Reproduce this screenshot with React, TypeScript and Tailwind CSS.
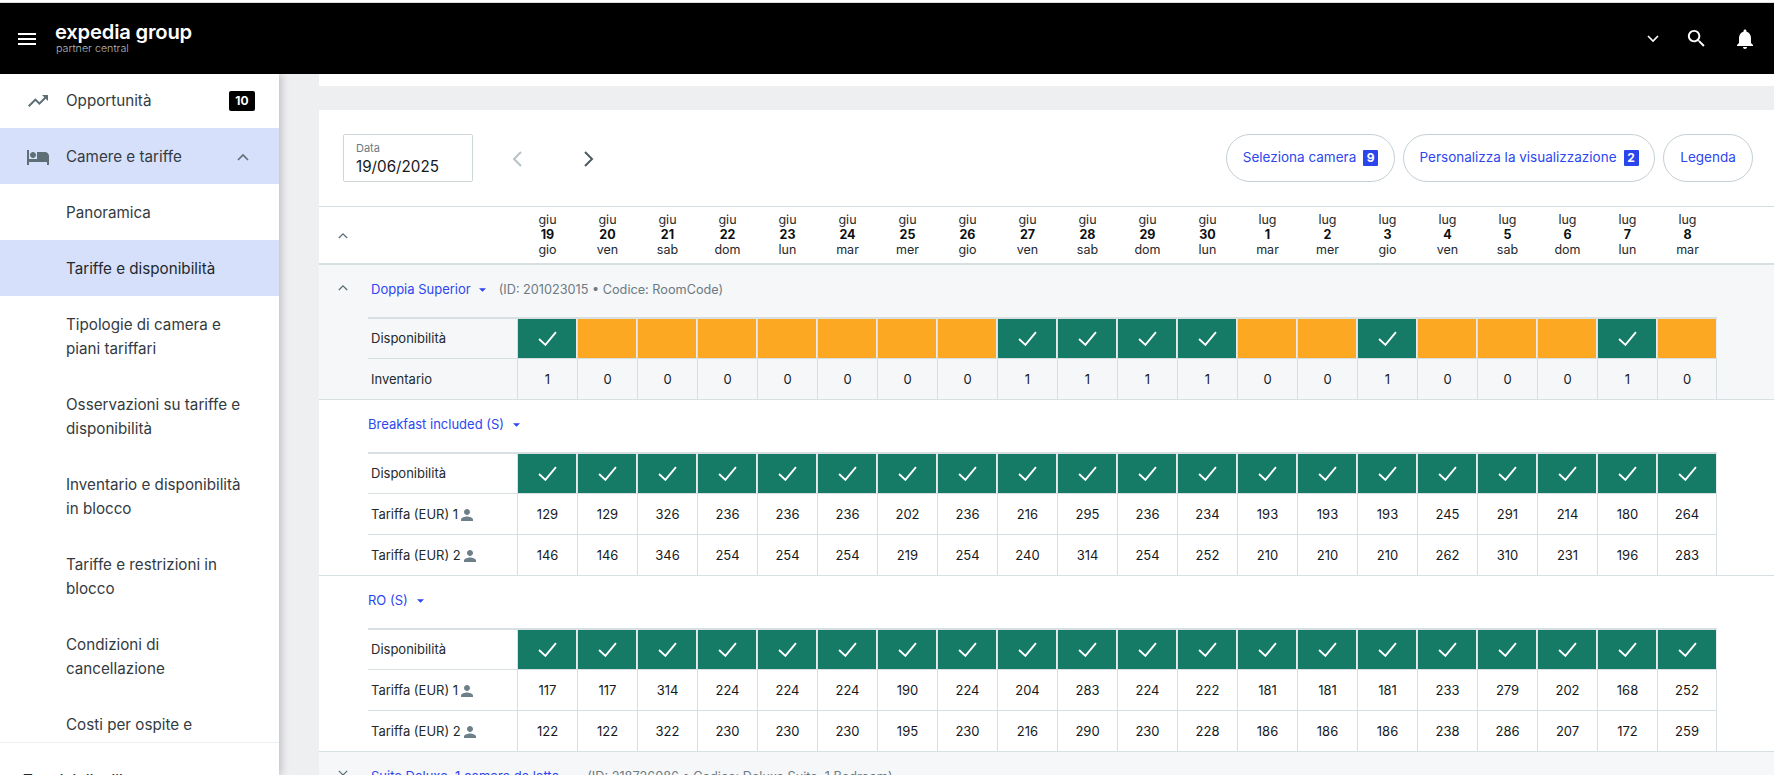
const dates = [
  ['giu', '19', 'gio'], ['giu', '20', 'ven'], ['giu', '21', 'sab'], ['giu', '22', 'dom'], ['giu', '23', 'lun'],
  ['giu', '24', 'mar'], ['giu', '25', 'mer'], ['giu', '26', 'gio'], ['giu', '27', 'ven'], ['giu', '28', 'sab'],
  ['giu', '29', 'dom'], ['giu', '30', 'lun'], ['lug', '1', 'mar'], ['lug', '2', 'mer'], ['lug', '3', 'gio'],
  ['lug', '4', 'ven'], ['lug', '5', 'sab'], ['lug', '6', 'dom'], ['lug', '7', 'lun'], ['lug', '8', 'mar'],
]

const inventory = [1, 0, 0, 0, 0, 0, 0, 0, 1, 1, 1, 1, 0, 0, 1, 0, 0, 0, 1, 0]
const allOpen = inventory.map(() => 1)

const breakfast1 = [129, 129, 326, 236, 236, 236, 202, 236, 216, 295, 236, 234, 193, 193, 193, 245, 291, 214, 180, 264]
const breakfast2 = [146, 146, 346, 254, 254, 254, 219, 254, 240, 314, 254, 252, 210, 210, 210, 262, 310, 231, 196, 283]
const ro1 = [117, 117, 314, 224, 224, 224, 190, 224, 204, 283, 224, 222, 181, 181, 181, 233, 279, 202, 168, 252]
const ro2 = [122, 122, 322, 230, 230, 230, 195, 230, 216, 290, 230, 228, 186, 186, 186, 238, 286, 207, 172, 259]

const navItems = [
  ['Tipologie di camera e', 'piani tariffari'],
  ['Osservazioni su tariffe e', 'disponibilità'],
  ['Inventario e disponibilità', 'in blocco'],
  ['Tariffe e restrizioni in', 'blocco'],
  ['Condizioni di', 'cancellazione'],
  ['Costi per ospite e', 'occupazione'],
]

function MaterialIcon({ d, className }: { d: string; className: string }) {
  return (
    <svg viewBox="0 0 24 24" className={className} fill="currentColor">
      <path d={d} />
    </svg>
  )
}

function Chevron({ up, className }: { up?: boolean; className: string }) {
  return (
    <svg viewBox="0 0 12 8" className={className} fill="none" stroke="currentColor" strokeWidth="1.6">
      <path d={up ? 'M1 7l5-5 5 5' : 'M1 1l5 5 5-5'} />
    </svg>
  )
}

function Caret() {
  return (
    <svg viewBox="0 0 8 4" className="w-[7px] h-[4px] text-[#2d46f0]" fill="currentColor">
      <path d="M0 0h8L4 4z" />
    </svg>
  )
}

function AvailabilityRow({ values }: { values: number[] }) {
  return (
    <div className="flex h-[41px] border-t-2 border-[#d8dfe3]">
      <div className="w-[149px] pl-[3px] pt-[10px] text-[13px] leading-[18px] text-[#23292d]">Disponibilità</div>
      {values.map((v, i) => (
        <div key={i} className="w-[60px] border-l border-[#d8dfe3] flex bg-[#e6ebee]">
          <div className={`w-[58px] flex items-center justify-center ${v > 0 ? 'bg-[#157a66]' : 'bg-[#fca822]'}`}>
            {v > 0 && (
              <svg viewBox="0 0 18 14" className="w-[19px] h-[15px]" fill="none" stroke="#fff" strokeWidth="1.8">
                <path d="M1 7.5l6 5.5L17 1" />
              </svg>
            )}
          </div>
        </div>
      ))}
    </div>
  )
}

function ValueRow({ label, values, person }: { label: string; values: number[]; person?: boolean }) {
  return (
    <div className="flex h-[41px] border-t border-[#d8dfe3]">
      <div className="w-[149px] pl-[3px] pt-[11px] text-[13px] leading-[18px] text-[#23292d] flex items-start">
        <span>{label}</span>
        {person && (
          <MaterialIcon
            className="w-[18px] h-[18px] text-[#6d8089] mt-px"
            d="M12 12c2.21 0 4-1.79 4-4s-1.79-4-4-4-4 1.79-4 4 1.79 4 4 4zm0 2c-2.67 0-8 1.34-8 4v2h16v-2c0-2.66-5.33-4-8-4z"
          />
        )}
      </div>
      {values.map((v, i) => (
        <div
          key={i}
          className={`w-[60px] border-l border-[#d8dfe3] flex items-center justify-center pt-[2px] text-[13px] text-[#15191c] ${
            i === 19 ? 'border-r' : ''
          }`}
        >
          {v}
        </div>
      ))}
    </div>
  )
}

function RoomHeader({ name, code, open }: { name: string; code: string; open: boolean }) {
  return (
    <div className="h-[52px] flex items-center pl-[12px] pb-[2px]">
      {open ? (
        <Chevron up className="w-[10px] h-[7px] mx-[7px] mb-[6px] text-[#5d6e75]" />
      ) : (
        <svg viewBox="0 0 12 12" className="w-[10px] h-[10px] mx-[7px] mb-[4px] text-[#5d6e75]" fill="none" stroke="currentColor" strokeWidth="1.5">
          <path d="M1 1l10 10M11 1L1 11" />
        </svg>
      )}
      <span className="ml-[16px] text-[13px] text-[#2d46f0]">{name}</span>
      <span className="ml-[8px]"><Caret /></span>
      <span className="ml-[13px] text-[12.7px] text-[#6c7a82]">{code}</span>
    </div>
  )
}

function RatePlan({ name, first, second }: { name: string; first: number[]; second: number[] }) {
  return (
    <section className="border-b border-[#d8dfe3]">
      <div className="h-[52px] flex items-center pl-[49px] pb-[2px] gap-[9px]">
        <span className="text-[13px] text-[#2d46f0]">{name}</span>
        <Caret />
      </div>
      <div className="ml-[49px] w-[1349px]">
        <AvailabilityRow values={allOpen} />
        <ValueRow label="Tariffa (EUR) 1" values={first} person />
        <ValueRow label="Tariffa (EUR) 2" values={second} person />
      </div>
    </section>
  )
}

function PillButton({ label, count, className }: { label: string; count?: number; className: string }) {
  return (
    <button className={`h-[48px] rounded-full border border-[#c4d0d6] flex items-center justify-center gap-[7px] text-[13.5px] text-[#2d46f0] ${className}`}>
      {label}
      {count !== undefined && (
        <span className="w-[15px] h-[16px] bg-[#2b45ee] text-white text-[12px] font-bold leading-[16px] rounded-[1px] text-center">
          {count}
        </span>
      )}
    </button>
  )
}

export default function App() {
  return (
    <div className="h-[775px] overflow-hidden bg-[#eeeff1] font-['Inter','Liberation_Sans',sans-serif] flex flex-col">
      <div className="h-[3px] bg-white border-b border-[#dddddd]" />
      <header className="h-[71px] bg-black flex items-center text-white">
        <MaterialIcon className="w-[24px] h-[24px] ml-[15px]" d="M3 18h18v-2H3v2zm0-5h18v-2H3v2zm0-7v2h18V6H3z" />
        <div className="ml-[16px] -mt-[2px]">
          <div className="text-[20.2px] leading-[23px] font-semibold tracking-[-0.2px]">expedia group</div>
          <div className="text-[10.7px] leading-[12px] font-light text-[#b8b8b8] ml-px">partner central</div>
        </div>
        <div className="ml-auto flex items-center pr-[17px]">
          <Chevron className="w-[12px] h-[8px]" />
          <MaterialIcon
            className="w-[23px] h-[23px] ml-[26px]"
            d="M15.5 14h-.79l-.28-.27C15.41 12.59 16 11.11 16 9.5 16 5.91 13.09 3 9.5 3S3 5.91 3 9.5 5.91 16 9.5 16c1.61 0 3.09-.59 4.23-1.57l.27.28v.79l5 4.99L20.49 19l-4.99-5zm-6 0C7.01 14 5 11.99 5 9.5S7.01 5 9.5 5 14 7.01 14 9.5 11.99 14 9.5 14z"
          />
          <MaterialIcon
            className="w-[24px] h-[24px] ml-[25px]"
            d="M12 22c1.1 0 2-.9 2-2h-4c0 1.1.89 2 2 2zm6-6v-5c0-3.07-1.64-5.64-4.5-6.32V4c0-.83-.67-1.5-1.5-1.5s-1.5.67-1.5 1.5v.68C7.63 5.36 6 7.92 6 11v5l-2 2v1h16v-1l-2-2z"
          />
        </div>
      </header>

      <div className="flex flex-1 min-h-0">
        <aside className="w-[279px] shrink-0 bg-white flex flex-col shadow-[2px_0_8px_rgba(0,0,0,0.22)] text-[15.2px] text-[#343b3f]">
          <nav className="h-[668px] shrink-0 overflow-hidden">
            <div className="h-[54px] flex items-center pl-[26px]">
              <MaterialIcon
                className="w-[24px] h-[24px] text-[#5d6e75]"
                d="M16 6l2.29 2.29-4.88 4.88-4-4L2 16.59 3.41 18l6-6 4 4 6.3-6.29L22 12V6z"
              />
              <span className="ml-[16px]">Opportunità</span>
              <span className="ml-auto mr-[24px] w-[26px] h-[20px] bg-black text-white text-[12px] font-bold leading-[20px] rounded-[2px] text-center">
                10
              </span>
            </div>
            <div className="h-[56px] flex items-center pl-[26px] pt-[2px] bg-[#d6e0fb]">
              <MaterialIcon
                className="w-[24px] h-[24px] text-[#5d6e75]"
                d="M7 13c1.66 0 3-1.34 3-3S8.66 7 7 7s-3 1.34-3 3 1.34 3 3 3zm12-6h-8v7H3V5H1v15h2v-3h18v3h2v-9c0-2.21-1.79-4-4-4z"
              />
              <span className="ml-[16px]">Camere e tariffe</span>
              <Chevron up className="ml-auto mr-[30px] w-[12px] h-[8px] text-[#5d6e75]" />
            </div>
            <div className="h-[56px] flex items-center pl-[66px] pt-[2px]">Panoramica</div>
            <div className="h-[56px] flex items-center pl-[66px] pt-[2px] bg-[#d6e0fb] text-[#23292d]">Tariffe e disponibilità</div>
            {navItems.map(([a, b]) => (
              <div key={a} className="h-[80px] flex flex-col justify-center pl-[66px] pt-[2px] leading-[24px]">
                <span>{a}</span>
                <span>{b}</span>
              </div>
            ))}
          </nav>
          <div className="border-t border-[#eceef0] flex-1 pl-[23px] pt-[29px] leading-[18px] text-[#23292d]">
            Termini di utilizzo
          </div>
        </aside>

        <main className="flex-1 min-w-0 ml-[40px]">
          <div className="h-[12px] bg-white" />
          <div className="h-[24px]" />
          <div className="bg-white">
            <div className="h-[96px] flex items-center pl-[24px] pr-[21px] pb-[1px]">
              <div className="w-[130px] h-[48px] border border-[#d0d7db] rounded-[2px] pl-[12px] pt-[5px]">
                <div className="text-[11px] leading-[16px] text-[#6c7a82]">Data</div>
                <div className="text-[15.2px] leading-[22px] text-[#15191c]">19/06/2025</div>
              </div>
              <svg viewBox="0 0 12 18" className="ml-[38px] mt-[2px] w-[12px] h-[18px] text-[#b9c2c7]" fill="none" stroke="currentColor" strokeWidth="2">
                <path d="M10 2L3 9l7 7" />
              </svg>
              <svg viewBox="0 0 12 18" className="ml-[60px] mt-[2px] w-[12px] h-[18px] text-[#4d5c63]" fill="none" stroke="currentColor" strokeWidth="2">
                <path d="M2 2l7 7-7 7" />
              </svg>
              <div className="ml-auto flex gap-[8px]">
                <PillButton label="Seleziona camera" count={9} className="w-[169px]" />
                <PillButton label="Personalizza la visualizzazione" count={2} className="w-[252px]" />
                <PillButton label="Legenda" className="w-[90px]" />
              </div>
            </div>

            <div className="h-[59px] flex border-t border-b-2 border-[#d8dfe3] items-center pb-[1px]">
              <div className="w-[198px] pl-[19px] pt-[1px]">
                <Chevron up className="w-[10px] h-[7px] text-[#5d6e75]" />
              </div>
              {dates.map(([m, d, w]) => (
                <div key={m + d} className="w-[60px] pl-px text-center text-[12.5px] leading-[15px] text-[#23292d]">
                  <div>{m}</div>
                  <div className="font-bold text-[#0c0f11]">{d}</div>
                  <div>{w}</div>
                </div>
              ))}
            </div>

            <section className="bg-[#f5f7f9] border-b border-[#d8dfe3]">
              <RoomHeader name="Doppia Superior" code="(ID: 201023015 • Codice: RoomCode)" open />
              <div className="ml-[49px] w-[1349px]">
                <AvailabilityRow values={inventory} />
                <ValueRow label="Inventario" values={inventory} />
              </div>
            </section>

            <RatePlan name="Breakfast included (S)" first={breakfast1} second={breakfast2} />
            <RatePlan name="RO (S)" first={ro1} second={ro2} />

            <section className="bg-[#f5f7f9]">
              <RoomHeader name="Suite Deluxe, 1 camera da letto" code="(ID: 218726086 • Codice: Deluxe Suite, 1 Bedroom)" open={false} />
            </section>
          </div>
        </main>
      </div>
    </div>
  )
}
